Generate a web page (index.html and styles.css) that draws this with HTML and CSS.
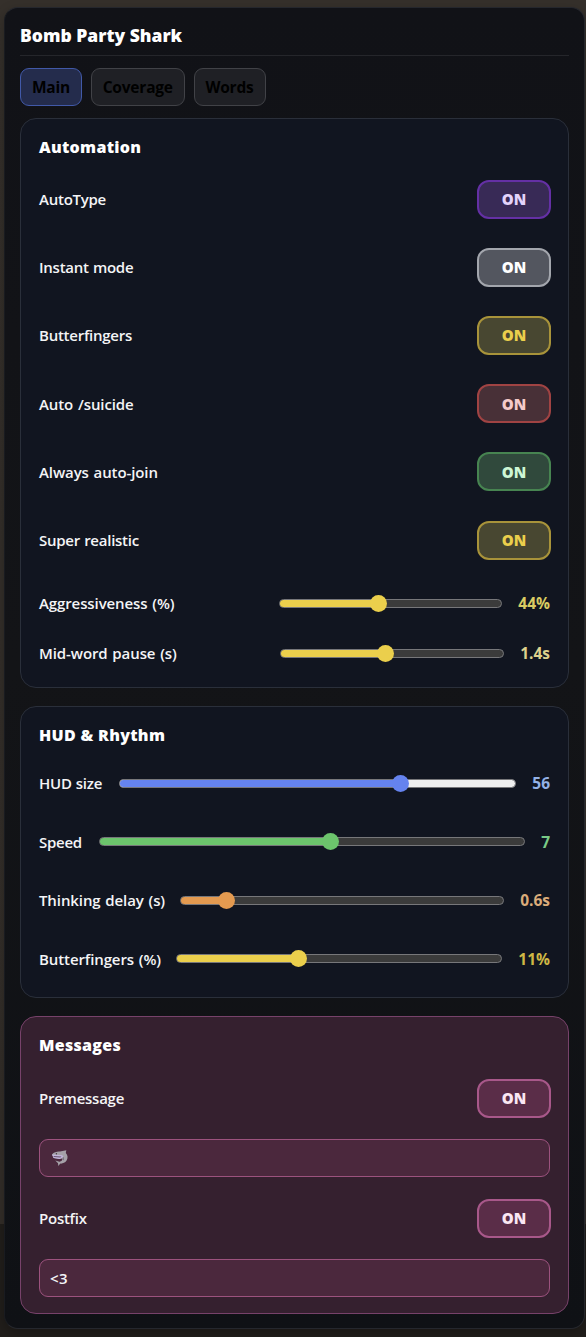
FILE: index.html
```html
<!DOCTYPE html>
<html lang="en">
<head>
  <meta charset="UTF-8">
  <title>Bomb Party Shark</title>
  <link rel="stylesheet" href="styles.css">
</head>
<body>
  <div class="panel">
    <div class="header">Bomb Party Shark</div>
    <div class="tabs">
      <button class="tab tab-main active">Main</button>
      <button class="tab tab-coverage">Coverage</button>
      <button class="tab tab-words">Words</button>
    </div>

    <section class="card">
      <h2>Automation</h2>
      <div class="row"><span class="label">AutoType</span><button class="toggle purple">ON</button></div>
      <div class="row"><span class="label">Instant mode</span><button class="toggle white">ON</button></div>
      <div class="row"><span class="label">Butterfingers</span><button class="toggle yellow">ON</button></div>
      <div class="row"><span class="label wide">Auto /suicide</span><button class="toggle red">ON</button></div>
      <div class="row"><span class="label wide">Always auto-join</span><button class="toggle green">ON</button></div>
      <div class="row"><span class="label">Super realistic</span><button class="toggle yellow">ON</button></div>
      <div class="sliders compact">
        <div class="row slide aggro">
          <span class="label wide">Aggressiveness (%)</span>
          <div class="range"><div class="fill" style="width:44.4%"></div></div>
          <span class="value">44%</span>
        </div>
        <div class="row slide pause">
          <span class="label wide">Mid-word pause (s)</span>
          <div class="range"><div class="fill" style="width:47%"></div></div>
          <span class="value">1.4s</span>
        </div>
      </div>
    </section>

    <section class="card hud-card">
      <h2>HUD &amp; Rhythm</h2>
      <div class="sliders">
        <div class="row slide hud">
          <span class="label">HUD size</span>
          <div class="range"><div class="fill" style="width:71%"></div></div>
          <span class="value">56</span>
        </div>
        <div class="row slide speed">
          <span class="label">Speed</span>
          <div class="range"><div class="fill" style="width:54.3%"></div></div>
          <span class="value">7</span>
        </div>
        <div class="row slide thinking">
          <span class="label wide">Thinking delay (s)</span>
          <div class="range"><div class="fill" style="width:13.9%"></div></div>
          <span class="value">0.6s</span>
        </div>
        <div class="row slide butter">
          <span class="label wide">Butterfingers (%)</span>
          <div class="range"><div class="fill" style="width:37.3%"></div></div>
          <span class="value">11%</span>
        </div>
      </div>
    </section>

    <section class="card pink">
      <h2>Messages</h2>
      <div class="row"><span class="label">Premessage</span><button class="toggle rose">ON</button></div>
      <div class="field">
        <svg class="shark" viewBox="0 0 18 18">
          <path d="M1 5.5C3 3 6 2.4 9 2.6L15.3 1.2 14.8 4C16.8 6 17.2 9 15.6 11.6 14 14 11.4 14.8 9.3 14.6L7.3 17 7 14.2 4.3 11.4 8.5 12.7C10.4 12.6 11.4 11.4 11.5 9.6L8.5 10 2.6 9Z" fill="#a5a1a8"/>
          <path d="M1 5.5 11.3 6.2 12.3 8 8.6 10 2.6 9Z" fill="#c3b5dc"/>
          <path d="M2.3 7.1 10.5 7.4 9.3 8.5 3 8.1Z" fill="#68546f"/>
          <circle cx="5.4" cy="4.8" r=".7" fill="#453740"/>
          <path d="M12.3 8.2 12.6 11.2" stroke="#6d6475" stroke-width=".8"/>
        </svg>
      </div>
      <div class="row"><span class="label">Postfix</span><button class="toggle rose">ON</button></div>
      <div class="field">&lt;3</div>
    </section>
  </div>
</body>
</html>
```
FILE: styles.css
```css
* {
  box-sizing: border-box;
}
body {
  margin: 0;
  padding: 7px 1px 8px 4px;
  height: 1337px;
  overflow: hidden;
  font-family: "Open Sans", "Noto Sans", sans-serif;
  background: linear-gradient(#35302b 0, #332e29 1224px, #211e1b 1224px, #211e1b 100%);
  color: #f4f4f6;
}
.panel {
  height: 1322px;
  padding: 0 15px;
  border: 1px solid #25272d;
  border-left-color: #191b20;
  border-radius: 14px;
  background: linear-gradient(#111217, #131417 50%, #0f1115);
  box-shadow: 0 4px 12px rgba(0,0,0,0.25);
}
.header {
  height: 48px;
  padding-top: 14px;
  border-bottom: 1px solid #25262b;
  font-size: 17.5px;
  font-weight: 800;
  line-height: 26px;
  color: #fff;
}
.tabs {
  display: flex;
  gap: 9px;
  padding: 12px 0;
}
.tab {
  height: 38px;
  padding: 0;
  border: 1px solid #414247;
  border-radius: 9px;
  background: #1f2025;
  color: #000;
  font: 700 15.5px "Open Sans", sans-serif;
  letter-spacing: -0.2px;
}
.tab-main {
  width: 62px;
}
.tab-coverage {
  width: 93.5px;
}
.tab-words {
  width: 72px;
}
.tab.active {
  border-color: #4159a8;
  background: #242c4c;
}
.card {
  margin-bottom: 18.2px;
  padding: 0 18px 9px;
  border: 1px solid #2a2f3a;
  border-radius: 16px;
  background: #111520;
}
.card h2 {
  height: 46px;
  margin: 0;
  padding-top: 17px;
  font-size: 16px;
  font-weight: 800;
  line-height: 22px;
  letter-spacing: 0.3px;
  color: #fff;
}
.hud-card h2, .pink h2 {
  height: 46.8px;
}
.row {
  display: flex;
  align-items: center;
  height: 68.2px;
}
.label {
  font-size: 15px;
  font-weight: 600;
  letter-spacing: -0.25px;
  word-spacing: 0.5px;
  white-space: nowrap;
}
.wide {
  letter-spacing: -0.1px;
  word-spacing: 1px;
}
.toggle {
  width: 74px;
  height: 39px;
  margin-left: auto;
  margin-right: -1px;
  padding: 0;
  border: 2px solid;
  border-radius: 12px;
  font: 800 15px "Open Sans", sans-serif;
}
.purple {
  border-color: #6430a5;
  background: #382a56;
  color: #e3d3fb;
}
.white {
  border-color: #a3a6ad;
  background: #53565f;
  color: #fff;
}
.yellow {
  border-color: #a8933a;
  background: #484731;
  color: #ebcf4c;
}
.red {
  border-color: #a04343;
  background: #483037;
  color: #f4caca;
}
.green {
  border-color: #478451;
  background: #30493c;
  color: #cdf6d5;
}
.rose {
  border-color: #a8588a;
  background: #5a2d48;
  color: #fbe6f3;
}
.slide {
  height: 58.5px;
}
.compact {
  padding-top: 4px;
}
.compact .slide {
  height: 50px;
}
.range {
  height: 9px;
  margin-left: auto;
  border: 1px solid #77777a;
  border-radius: 5px;
  background: #3b3b3b;
}
.fill {
  position: relative;
  height: 7px;
  border-radius: 4px 0 0 4px;
  background: var(--accent);
}
.fill::after {
  content: "";
  position: absolute;
  top: -5px;
  right: -9px;
  width: 17px;
  height: 17px;
  border-radius: 50%;
  background: var(--accent);
}
.value {
  flex: none;
  font-size: 15.5px;
  font-weight: 700;
  text-align: right;
  white-space: nowrap;
}
.aggro, .pause, .butter {
  --accent: #ebcf4c;
}
.hud {
  --accent: #6583ef;
}
.speed {
  --accent: #6cc46c;
}
.thinking {
  --accent: #e49a50;
}
.aggro .range {
  width: 223px;
}
.aggro .value {
  width: 48px;
  color: #d9cb62;
}
.pause .range {
  width: 224px;
}
.pause .value {
  width: 46px;
  color: #ded18d;
}
.hud .range {
  width: 397px;
  background: #efefef;
}
.hud .value {
  width: 34px;
  color: #93b1e6;
}
.speed .range {
  width: 426px;
}
.speed .value {
  width: 25px;
  color: #7acb87;
}
.thinking .range {
  width: 324px;
}
.thinking .value {
  width: 46px;
  color: #dbac7a;
}
.butter .range {
  width: 326px;
}
.butter .value {
  width: 48px;
  color: #cfb744;
}
.pink {
  margin-bottom: 0;
  padding-bottom: 16px;
  border-color: #77426a;
  background: #35202f;
}
.pink .row {
  height: 68px;
}
.field {
  display: flex;
  align-items: center;
  height: 38px;
  margin: 7px 0;
  padding: 0 10px;
  border: 1px solid #9c527e;
  border-radius: 9px;
  background: #4b283d;
  font-size: 15px;
  font-weight: 600;
  letter-spacing: 0.5px;
}
.field:last-child {
  margin-bottom: 0;
}
.shark {
  width: 18px;
  height: 18px;
  margin-left: 1px;
}
```
